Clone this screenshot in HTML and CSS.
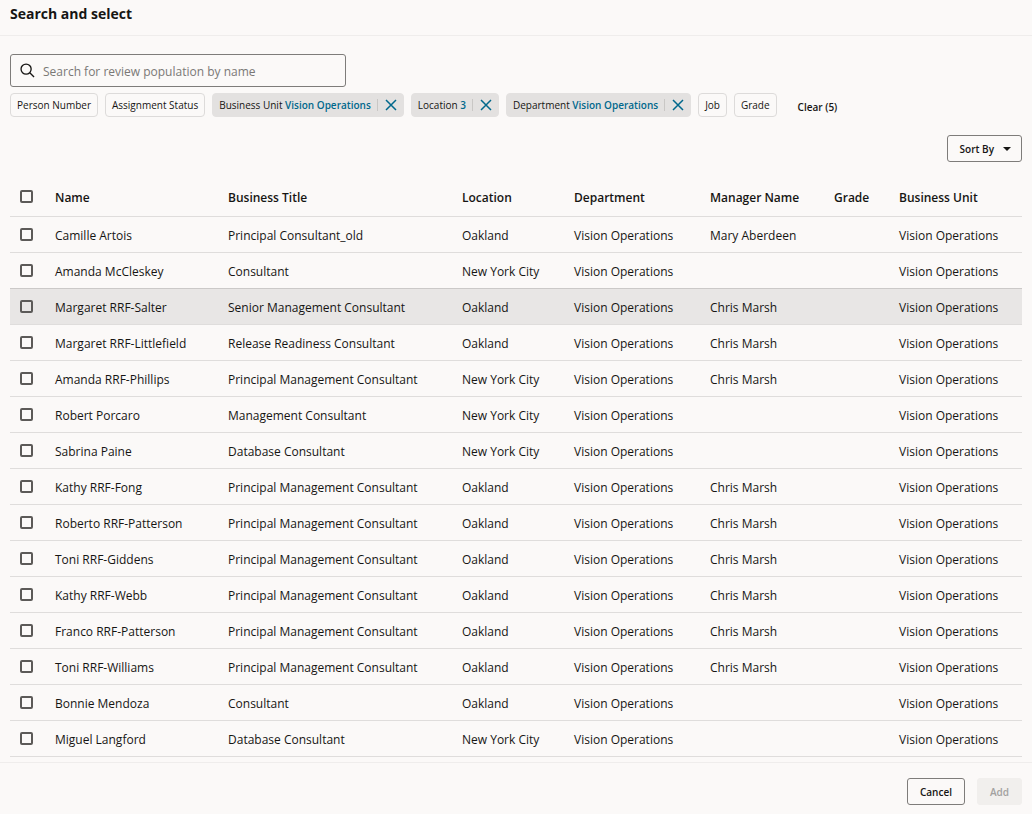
FILE: index.html
```html
<!DOCTYPE html>
<html lang="en">
<head>
<meta charset="utf-8">
<meta name="viewport" content="width=device-width, initial-scale=1">
<title>Search and select</title>
<link rel="stylesheet" href="styles.css">
</head>
<body>
<div class="dialog">
  <header class="dialog-header"><h1 class="dialog-title">Search and select</h1></header>
  <main class="dialog-body">
    <label class="search">
      <svg class="search-icon" viewBox="0 0 16 16" aria-hidden="true"><circle cx="6.5" cy="6.5" r="5.4"/><path d="M10.4 10.4 15 15"/></svg>
      <input class="search-input" type="text" placeholder="Search for review population by name" aria-label="Search">
    </label>
    <div class="filters">
      <button class="chip" type="button">Person Number</button>
      <button class="chip" type="button">Assignment Status</button>
      <span class="chip chip-on"><button class="chip-label" type="button">Business Unit <span class="chip-value">Vision Operations</span></button><button class="chip-remove" type="button" aria-label="Remove Business Unit"><svg viewBox="0 0 12 12"><path d="M1 1l10 10M11 1L1 11"/></svg></button></span>
      <span class="chip chip-on"><button class="chip-label" type="button">Location <span class="chip-value">3</span></button><button class="chip-remove" type="button" aria-label="Remove Location"><svg viewBox="0 0 12 12"><path d="M1 1l10 10M11 1L1 11"/></svg></button></span>
      <span class="chip chip-on"><button class="chip-label" type="button">Department <span class="chip-value">Vision Operations</span></button><button class="chip-remove" type="button" aria-label="Remove Department"><svg viewBox="0 0 12 12"><path d="M1 1l10 10M11 1L1 11"/></svg></button></span>
      <button class="chip" type="button">Job</button>
      <button class="chip" type="button">Grade</button>
      <button class="clear" type="button">Clear (5)</button>
    </div>
    <div class="toolbar">
      <button class="button button-sort" type="button">Sort By <svg class="caret" viewBox="0 0 8 4" aria-hidden="true"><path d="M0 0h8L4 4z"/></svg></button>
    </div>
    <table class="people">
      <colgroup><col class="c-check"><col class="c-name"><col class="c-title"><col class="c-location"><col class="c-department"><col class="c-manager"><col class="c-grade"><col class="c-unit"></colgroup>
      <thead>
        <tr><th class="check"><input type="checkbox" aria-label="Select all"></th><th>Name</th><th>Business Title</th><th>Location</th><th>Department</th><th>Manager Name</th><th>Grade</th><th>Business Unit</th></tr>
      </thead>
      <tbody>
        <tr><td class="check"><input type="checkbox" aria-label="Camille Artois"></td><td>Camille Artois</td><td>Principal Consultant_old</td><td>Oakland</td><td>Vision Operations</td><td>Mary Aberdeen</td><td></td><td>Vision Operations</td></tr>
        <tr class="before-active"><td class="check"><input type="checkbox" aria-label="Amanda McCleskey"></td><td>Amanda McCleskey</td><td>Consultant</td><td>New York City</td><td>Vision Operations</td><td></td><td></td><td>Vision Operations</td></tr>
        <tr class="active"><td class="check"><input type="checkbox" aria-label="Margaret RRF-Salter"></td><td>Margaret RRF-Salter</td><td>Senior Management Consultant</td><td>Oakland</td><td>Vision Operations</td><td>Chris Marsh</td><td></td><td>Vision Operations</td></tr>
        <tr><td class="check"><input type="checkbox" aria-label="Margaret RRF-Littlefield"></td><td>Margaret RRF-Littlefield</td><td>Release Readiness Consultant</td><td>Oakland</td><td>Vision Operations</td><td>Chris Marsh</td><td></td><td>Vision Operations</td></tr>
        <tr><td class="check"><input type="checkbox" aria-label="Amanda RRF-Phillips"></td><td>Amanda RRF-Phillips</td><td>Principal Management Consultant</td><td>New York City</td><td>Vision Operations</td><td>Chris Marsh</td><td></td><td>Vision Operations</td></tr>
        <tr><td class="check"><input type="checkbox" aria-label="Robert Porcaro"></td><td>Robert Porcaro</td><td>Management Consultant</td><td>New York City</td><td>Vision Operations</td><td></td><td></td><td>Vision Operations</td></tr>
        <tr><td class="check"><input type="checkbox" aria-label="Sabrina Paine"></td><td>Sabrina Paine</td><td>Database Consultant</td><td>New York City</td><td>Vision Operations</td><td></td><td></td><td>Vision Operations</td></tr>
        <tr><td class="check"><input type="checkbox" aria-label="Kathy RRF-Fong"></td><td>Kathy RRF-Fong</td><td>Principal Management Consultant</td><td>Oakland</td><td>Vision Operations</td><td>Chris Marsh</td><td></td><td>Vision Operations</td></tr>
        <tr><td class="check"><input type="checkbox" aria-label="Roberto RRF-Patterson"></td><td>Roberto RRF-Patterson</td><td>Principal Management Consultant</td><td>Oakland</td><td>Vision Operations</td><td>Chris Marsh</td><td></td><td>Vision Operations</td></tr>
        <tr><td class="check"><input type="checkbox" aria-label="Toni RRF-Giddens"></td><td>Toni RRF-Giddens</td><td>Principal Management Consultant</td><td>Oakland</td><td>Vision Operations</td><td>Chris Marsh</td><td></td><td>Vision Operations</td></tr>
        <tr><td class="check"><input type="checkbox" aria-label="Kathy RRF-Webb"></td><td>Kathy RRF-Webb</td><td>Principal Management Consultant</td><td>Oakland</td><td>Vision Operations</td><td>Chris Marsh</td><td></td><td>Vision Operations</td></tr>
        <tr><td class="check"><input type="checkbox" aria-label="Franco RRF-Patterson"></td><td>Franco RRF-Patterson</td><td>Principal Management Consultant</td><td>Oakland</td><td>Vision Operations</td><td>Chris Marsh</td><td></td><td>Vision Operations</td></tr>
        <tr><td class="check"><input type="checkbox" aria-label="Toni RRF-Williams"></td><td>Toni RRF-Williams</td><td>Principal Management Consultant</td><td>Oakland</td><td>Vision Operations</td><td>Chris Marsh</td><td></td><td>Vision Operations</td></tr>
        <tr><td class="check"><input type="checkbox" aria-label="Bonnie Mendoza"></td><td>Bonnie Mendoza</td><td>Consultant</td><td>Oakland</td><td>Vision Operations</td><td></td><td></td><td>Vision Operations</td></tr>
        <tr><td class="check"><input type="checkbox" aria-label="Miguel Langford"></td><td>Miguel Langford</td><td>Database Consultant</td><td>New York City</td><td>Vision Operations</td><td></td><td></td><td>Vision Operations</td></tr>
      </tbody>
    </table>
  </main>
  <footer class="dialog-footer">
    <button class="button" type="button">Cancel</button>
    <button class="button" type="button" disabled>Add</button>
  </footer>
</div>
</body>
</html>
```

FILE: styles.css
```css
* { box-sizing: border-box; }

body {
  margin: 0;
  background: #fbf9f8;
  color: #161513;
  font: 12px/16px "Open Sans", "Noto Sans", sans-serif;
}

button, input { margin: 0; font: inherit; color: inherit; }
button { padding: 0; border: 0; background: none; }

.dialog { display: flex; flex-direction: column; min-height: 100vh; }

.dialog-header { padding: 4px 10px 11px; border-bottom: 1px solid #efedec; }
.dialog-title { margin: 0; font-size: 14px; line-height: 20px; font-weight: 700; }

.dialog-body { flex: 1; padding: 18px 10px 5px; }

.search {
  display: flex;
  align-items: center;
  gap: 8px;
  width: 336px;
  max-width: 100%;
  height: 33px;
  padding: 0 9px;
  border: 1px solid #7e7c7a;
  border-radius: 3px;
}
.search-icon { flex: none; width: 15px; height: 15px; fill: none; stroke: #161513; stroke-width: 1.4; }
.search-input { flex: 1; min-width: 0; height: 31px; padding: 2px 0 0; border: 0; outline: 0; background: none; }
.search-input::placeholder { color: #7a7876; opacity: 1; }

.filters { display: flex; flex-wrap: wrap; gap: 7px; margin-top: 6px; font-size: 10px; font-weight: 500; }
.chip {
  display: flex;
  align-items: center;
  height: 24px;
  padding: 0 6px;
  border: 1px solid #dddbda;
  border-radius: 4px;
}
.chip-on { border-color: #e3e1e0; background: #e3e1e0; }
.chip-value { color: #00688c; font-weight: 600; }
.chip-remove {
  display: flex;
  margin-left: 6px;
  padding-left: 7px;
  border-left: 1px solid #c9c7c5;
}
.chip-remove svg { width: 12px; height: 12px; fill: none; stroke: #00688c; stroke-width: 1.5; }
.clear { margin-left: 14px; padding-top: 4px; font-weight: 600; }

.toolbar { display: flex; justify-content: flex-end; margin-top: 18px; }
.button {
  display: flex;
  align-items: center;
  height: 27px;
  padding: 0 12px;
  border: 1px solid #7e7c7a;
  border-radius: 3px;
  font-size: 10px;
  font-weight: 600;
}
.button:disabled { border-color: #f1efed; background: #f1efed; color: #a3a19f; }
.button-sort { gap: 9px; padding-right: 10px; }
.caret { width: 8px; height: 4px; fill: #161513; }

.people { width: 100%; margin-top: 18px; border-collapse: separate; border-spacing: 0; table-layout: fixed; }
.c-check { width: 45px; }
.c-name { width: 173px; }
.c-title { width: 234px; }
.c-location { width: 112px; }
.c-department { width: 136px; }
.c-manager { width: 124px; }
.c-grade { width: 65px; }
.c-unit { width: 123px; }
.people th, .people td {
  height: 36px;
  padding: 2px 0 0;
  border-bottom: 1px solid #dfdddc;
  text-align: left;
  white-space: nowrap;
  vertical-align: middle;
}
.people th { height: 37px; padding: 0; font-weight: 600; }
.people .check { padding: 0 0 0 10px; line-height: 0; }
.people th.check { padding-bottom: 3px; }
.check input {
  appearance: none;
  width: 13px;
  height: 13px;
  border: 2px solid #5c5a58;
  border-radius: 2px;
  vertical-align: middle;
}
.check input:checked { background: #5c5a58; }
.people .before-active td { border-bottom-color: #cbc9c8; }
.active { background: #e8e6e5; }

.dialog-footer {
  display: flex;
  justify-content: flex-end;
  gap: 12px;
  padding: 15px 10px 9px;
  border-top: 1px solid #efedec;
}
```
